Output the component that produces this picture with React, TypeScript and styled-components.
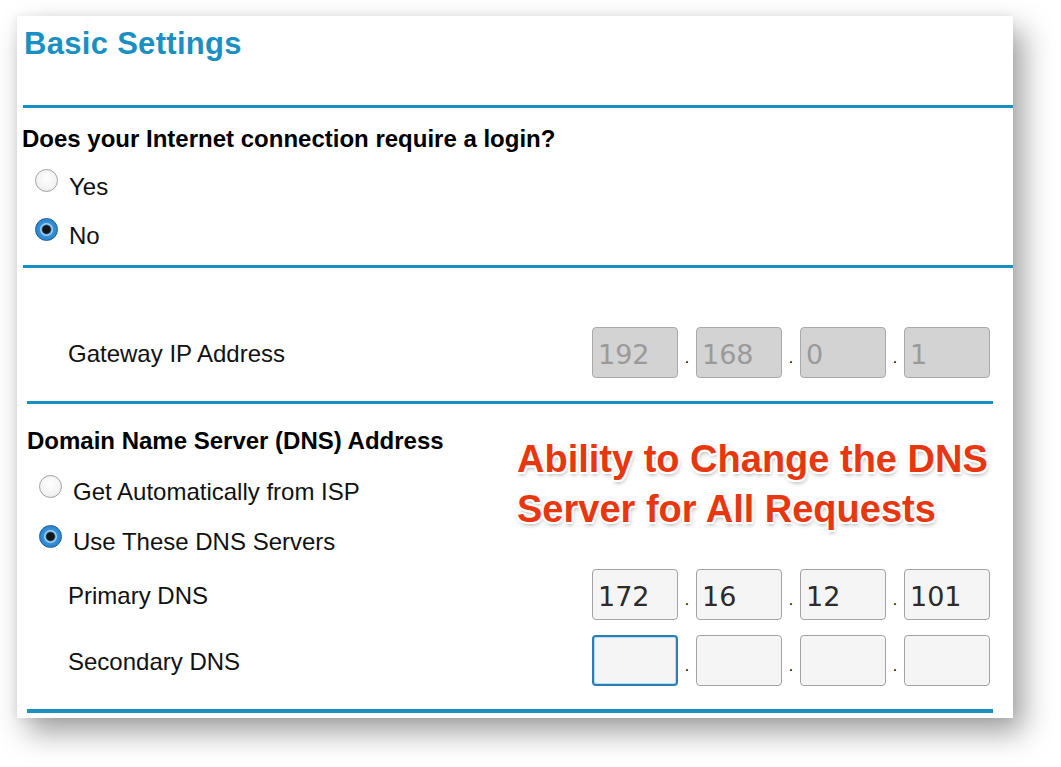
import React from 'react';
import styled, { createGlobalStyle } from 'styled-components';

const GlobalStyle = createGlobalStyle`
  html, body {
    margin: 0;
    padding: 0;
    background: #ffffff;
  }
  body {
    font-family: "Liberation Sans", Arial, sans-serif;
    color: #111;
  }
`;

const Page = styled.div`
  width: 1061px;
  height: 767px;
  overflow: hidden;
  padding: 16px 0 0 17px;
  box-sizing: border-box;
`;

const Card = styled.div`
  position: relative;
  width: 996px;
  height: 702px;
  background: #fff;
  box-shadow: 10px 14px 28px rgba(0, 0, 0, 0.38), -2px 0 8px rgba(0, 0, 0, 0.06);
  display: flex;
  flex-direction: column;
`;

const TitleBar = styled.div`
  height: 89px;
  box-sizing: border-box;
  padding: 10px 0 0 7px;
`;

const Title = styled.h1`
  margin: 0;
  font-size: 31px;
  line-height: 36px;
  font-weight: bold;
  letter-spacing: 0.3px;
  color: #1a8fc3;
`;

const Rule = styled.div<{ $inset?: number; $mt?: number; $h?: number }>`
  height: ${(p) => p.$h || 3}px;
  margin-left: ${(p) => p.$inset || 0}px;
  margin-top: ${(p) => p.$mt || 0}px;
  background: #1a8fc1;
`;

const Heading = styled.div<{ $mt: number; $ml: number }>`
  margin-top: ${(p) => p.$mt}px;
  margin-left: ${(p) => p.$ml}px;
  font-size: 24px;
  line-height: 28px;
  font-weight: bold;
  color: #000;
`;

const Spacer = styled.div<{ $h: number }>`
  height: ${(p) => p.$h}px;
`;

const RadioRow = styled.label<{ $ml: number; $h: number }>`
  display: flex;
  align-items: center;
  height: ${(p) => p.$h}px;
  margin-left: ${(p) => p.$ml}px;
  gap: 11px;
`;

const RadioDot = styled.span<{ $checked?: boolean }>`
  width: 23px;
  height: 23px;
  border-radius: 50%;
  box-sizing: border-box;
  flex-shrink: 0;
  border: ${(p) => (p.$checked ? '1.5px solid #1a5e96' : '1px solid #a2a2a2')};
  background: ${(p) =>
    p.$checked
      ? 'radial-gradient(circle, #151515 0 3.8px, #3a7db5 4.6px, #9fcbef 5.4px 6px, #3490d8 7px, #2a84cc 11px)'
      : 'radial-gradient(circle at 50% 40%, #ffffff 0, #f3f3f3 60%, #e2e2e2 100%)'};
`;

const RadioLabel = styled.span`
  font-size: 24px;
  line-height: 28px;
  padding-top: 12px;
  color: #111;
`;

const Lower = styled.div`
  margin: 0 20px 0 10px;
  display: flex;
  flex-direction: column;
`;

const FieldRow = styled.div<{ $mt: number }>`
  display: flex;
  align-items: center;
  justify-content: space-between;
  height: 51px;
  margin-top: ${(p) => p.$mt}px;
  padding: 0 3px 0 41px;
`;

const FieldLabel = styled.span`
  font-size: 24px;
  line-height: 28px;
  padding-top: 3px;
  color: #111;
`;

const IpGroup = styled.div`
  display: flex;
  align-items: stretch;
  height: 51px;
`;

const Octet = styled.input<{ $disabled?: boolean; $focus?: boolean }>`
  width: 86px;
  height: 51px;
  box-sizing: border-box;
  border-radius: 4px;
  padding: 3px 0 0 5px;
  margin: 0;
  font-family: "DejaVu Sans", sans-serif;
  font-size: 27px;
  outline: none;
  color: ${(p) => (p.$disabled ? '#9a9a9a' : '#2b2b2b')};
  background: ${(p) => (p.$disabled ? '#d3d3d3' : '#f5f5f5')};
  border: ${(p) =>
    p.$focus ? '2px solid #2d7db4' : p.$disabled ? '1.5px solid #a9a9a9' : '1.5px solid #a3a3a3'};
  box-shadow: ${(p) => (p.$focus ? 'inset 0 0 0 1px #aee0f8' : 'none')};
`;

const Dot = styled.span`
  width: 18px;
  text-align: center;
  font-size: 16px;
  line-height: 1;
  align-self: flex-end;
  padding-bottom: 12px;
  color: #000;
`;

const Callout = styled.div`
  position: absolute;
  left: 500px;
  top: 418px;
  font-size: 38px;
  line-height: 50px;
  font-weight: bold;
  color: #e8370f;
  text-shadow:
    -2px 0 0 #fff, 2px 0 0 #fff, 0 -2px 0 #fff, 0 2px 0 #fff,
    -1.5px -1.5px 0 #fff, 1.5px 1.5px 0 #fff, -1.5px 1.5px 0 #fff, 1.5px -1.5px 0 #fff,
    1px 3px 4px rgba(0, 0, 0, 0.35);
`;

type IpProps = { values: string[]; disabled?: boolean; focusFirst?: boolean };

function IpField({ values, disabled, focusFirst }: IpProps) {
  return (
    <IpGroup>
      {values.map((v, i) => (
        <React.Fragment key={i}>
          {i > 0 && <Dot>.</Dot>}
          <Octet
            readOnly
            value={v}
            $disabled={disabled}
            $focus={focusFirst && i === 0}
          />
        </React.Fragment>
      ))}
    </IpGroup>
  );
}

function Radio({ label, checked, ml, h }: { label: string; checked?: boolean; ml: number; h: number }) {
  return (
    <RadioRow $ml={ml} $h={h}>
      <RadioDot $checked={checked} />
      <RadioLabel>{label}</RadioLabel>
    </RadioRow>
  );
}

export default function App() {
  return (
    <>
      <GlobalStyle />
      <Page>
        <Card>
          <TitleBar>
            <Title>Basic Settings</Title>
          </TitleBar>
          <Rule $inset={6} />
          <Heading $mt={17} $ml={5}>Does your Internet connection require a login?</Heading>
          <Spacer $h={3} />
          <Radio label="Yes" ml={18} h={49} />
          <Radio label="No" checked ml={18} h={49} />
          <Rule $inset={6} $mt={11} />

          <Lower>
            <FieldRow $mt={59}>
              <FieldLabel>Gateway IP Address</FieldLabel>
              <IpField values={['192', '168', '0', '1']} disabled />
            </FieldRow>
            <Rule $mt={23} />
            <Heading $mt={23} $ml={0}>Domain Name Server (DNS) Address</Heading>
            <Spacer $h={6} />
            <Radio label="Get Automatically from ISP" ml={12} h={50} />
            <Radio label="Use These DNS Servers" checked ml={12} h={50} />
            <FieldRow $mt={8}>
              <FieldLabel>Primary DNS</FieldLabel>
              <IpField values={['172', '16', '12', '101']} />
            </FieldRow>
            <FieldRow $mt={15}>
              <FieldLabel>Secondary DNS</FieldLabel>
              <IpField values={['', '', '', '']} focusFirst />
            </FieldRow>
            <Rule $mt={23} $h={4} />
          </Lower>

          <Callout>
            Ability to Change the DNS
            <br />
            Server for All Requests
          </Callout>
        </Card>
      </Page>
    </>
  );
}
